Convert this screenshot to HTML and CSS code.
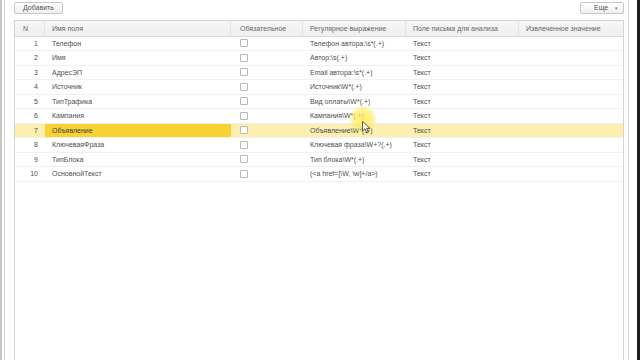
FILE: index.html
```html
<!DOCTYPE html>
<html lang="ru">
<head>
<meta charset="utf-8">
<link rel="stylesheet" href="styles.css">
</head>
<body>
<div class="window">
  <div class="panel">
    <div class="toolbar">
      <button class="btn">Добавить</button>
      <button class="btn btn-more">Еще <span class="caret">▾</span></button>
    </div>
    <div class="table">
      <div class="row head">
        <div class="c c-n">N</div>
        <div class="c c-name">Имя поля</div>
        <div class="c c-req">Обязательное</div>
        <div class="c c-re">Регулярное выражение</div>
        <div class="c c-field">Поле письма для анализа</div>
        <div class="c c-val">Извлеченное значение</div>
      </div>
      <div class="row"><div class="c c-n">1</div><div class="c c-name">Телефон</div><div class="c c-req"><span class="chk"></span></div><div class="c c-re">Телефон автора:\s*(.+)</div><div class="c c-field">Текст</div><div class="c c-val"></div></div>
      <div class="row"><div class="c c-n">2</div><div class="c c-name">Имя</div><div class="c c-req"><span class="chk"></span></div><div class="c c-re">Автор:\s(.+)</div><div class="c c-field">Текст</div><div class="c c-val"></div></div>
      <div class="row"><div class="c c-n">3</div><div class="c c-name">АдресЭП</div><div class="c c-req"><span class="chk"></span></div><div class="c c-re">Email автора:\s*(.+)</div><div class="c c-field">Текст</div><div class="c c-val"></div></div>
      <div class="row"><div class="c c-n">4</div><div class="c c-name">Источник</div><div class="c c-req"><span class="chk"></span></div><div class="c c-re">Источник\W*(.+)</div><div class="c c-field">Текст</div><div class="c c-val"></div></div>
      <div class="row"><div class="c c-n">5</div><div class="c c-name">ТипТрафика</div><div class="c c-req"><span class="chk"></span></div><div class="c c-re">Вид оплаты\W*(.+)</div><div class="c c-field">Текст</div><div class="c c-val"></div></div>
      <div class="row"><div class="c c-n">6</div><div class="c c-name">Кампания</div><div class="c c-req"><span class="chk"></span></div><div class="c c-re">Кампания\W*(.+)</div><div class="c c-field">Текст</div><div class="c c-val"></div></div>
      <div class="row sel"><div class="c c-n">7</div><div class="c c-name cur">Объявление</div><div class="c c-req"><span class="chk"></span></div><div class="c c-re">Объявление\W*(.+)</div><div class="c c-field">Текст</div><div class="c c-val"></div></div>
      <div class="row"><div class="c c-n">8</div><div class="c c-name">КлючеваяФраза</div><div class="c c-req"><span class="chk"></span></div><div class="c c-re">Ключевая фраза\W+?(.+)</div><div class="c c-field">Текст</div><div class="c c-val"></div></div>
      <div class="row"><div class="c c-n">9</div><div class="c c-name">ТипБлока</div><div class="c c-req"><span class="chk"></span></div><div class="c c-re">Тип блока\W*(.+)</div><div class="c c-field">Текст</div><div class="c c-val"></div></div>
      <div class="row"><div class="c c-n">10</div><div class="c c-name">ОсновнойТекст</div><div class="c c-req"><span class="chk"></span></div><div class="c c-re">(&lt;a href=[\W, \w]+/a&gt;)</div><div class="c c-field">Текст</div><div class="c c-val"></div></div>
      <div class="glow"></div>
      <svg class="cursor" width="9" height="13" viewBox="0 0 9 13"><path d="M0.5 0.5 L0.5 10 L3 7.8 L4.8 12 L6.3 11.3 L4.6 7.3 L8 7.3 Z" fill="#fff" stroke="#333" stroke-width="0.8"/></svg>
    </div>
  </div>
</div>
</body>
</html>
```
FILE: styles.css
```css
* { box-sizing: border-box; }
html, body { margin: 0; padding: 0; background: #fff; }
body { font-family: "Liberation Sans", Arial, sans-serif; font-size: 7px; color: #505050; }

.window {
  height: 360px;
  width: 640px;
  display: flex;
  border-left: 2px solid #c6c6c6;
  padding-left: 2px;
  border-right: 3px solid #1e1e1e;
  padding-right: 8px;
  background: #fff;
}
.panel {
  flex: 1;
  display: flex;
  flex-direction: column;
  border-left: 1px solid #d6d6d6;
  border-right: 1px solid #d6d6d6;
  padding: 2px 4px 0 9px;
}
.toolbar {
  display: flex;
  justify-content: space-between;
  height: 18px;
}
.btn {
  font: inherit;
  color: #555;
  height: 12px;
  padding: 0 8px;
  border: 1px solid #c8c8c8;
  border-radius: 2px;
  background: linear-gradient(#ffffff, #efefef);
  line-height: 10px;
}
.btn-more { width: 44px; text-align: left; padding-left: 13px; position: relative; }
.caret { position: absolute; right: 5px; top: 0; font-size: 5px; color: #777; }

.table {
  flex: 1;
  position: relative;
  border: 1px solid #d4d4d4;
  border-bottom: none;
}
.row {
  display: grid;
  grid-template-columns: 30px 186px 72px 103px 113px 1fr;
  height: 14.5px;
  align-items: center;
  border-bottom: 1px solid #f1f1f1;
}
.row.head {
  height: 15.5px;
  background: linear-gradient(#f6f6f6, #efefef);
  border-bottom: 1px solid #dcdcdc;
  color: #666;
}
.c {
  height: 100%;
  display: flex;
  align-items: center;
  padding-left: 7px;
  white-space: nowrap;
  overflow: hidden;
}
.head .c { border-right: 1px solid #e4e4e4; }
.head .c:last-child { border-right: none; }
.c-n { justify-content: flex-end; padding-right: 7px; padding-left: 0; }
.head .c-n { justify-content: flex-start; padding-left: 8px; }
.c-req { padding-left: 9px; }

.chk {
  width: 8px;
  height: 8px;
  border: 1px solid #b8b8b8;
  border-radius: 1px;
  background: #fff;
}

.row.sel { background: #fcefb0; }
.row.sel .cur { background: #f8d132; color: #444; }

.glow {
  position: absolute;
  left: 334px;
  top: 84px;
  width: 28px;
  height: 28px;
  border-radius: 50%;
  background: radial-gradient(circle, rgba(255, 236, 90, 0.95) 0%, rgba(255, 236, 90, 0.6) 50%, rgba(255, 236, 90, 0) 72%);
  pointer-events: none;
}
.cursor { position: absolute; left: 347px; top: 100px; }
```
